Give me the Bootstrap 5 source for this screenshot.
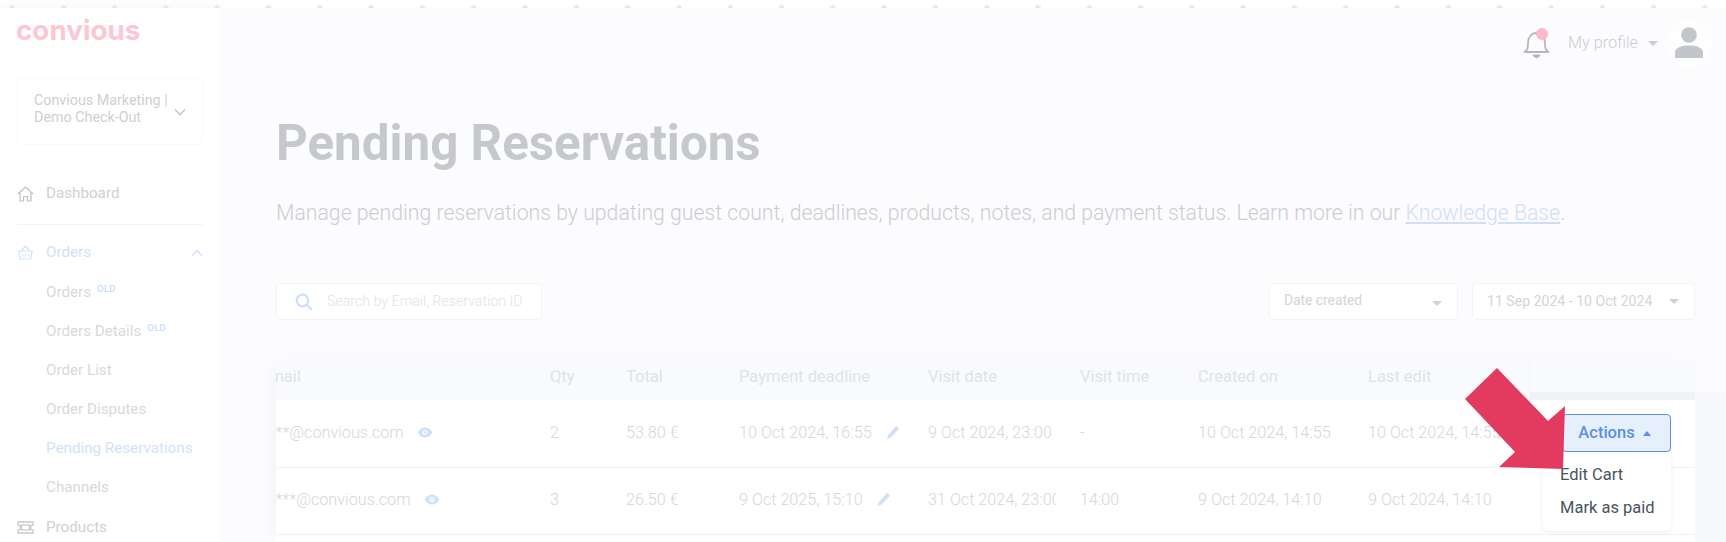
<!DOCTYPE html>
<html lang="en"><head><meta charset="utf-8"><title>Pending Reservations</title>
<link href="https://cdn.jsdelivr.net/npm/bootstrap@5.3.0/dist/css/bootstrap.min.css" rel="stylesheet">
<script src="https://cdn.jsdelivr.net/npm/bootstrap@5.3.0/dist/js/bootstrap.bundle.min.js"></script>
<style>
html,body{height:542px;overflow:hidden;background:#fff}
body{font-family:Roboto,"Liberation Sans",sans-serif;color:#d0d2d6;font-size:15px}
.strip{height:8px;background:#fff radial-gradient(circle at 12px 8px,#e4e7f3 2.6px,transparent 3px) 0 0/51.3px 8px repeat-x}
.shell{height:534px}
.side{width:220px;flex:none;background:#fff;padding:0 17px;box-shadow:0 0 18px rgba(230,233,245,.45)}
.logo{font-family:Inter,sans-serif;font-weight:700;font-size:27.8px;line-height:30px;color:#fcc7d2;margin:7px 0 0 -1px;height:32px}
.acct{height:67px;margin-top:31px;border:1px solid #f9f9fb;border-radius:5px;padding:0 16px 6px 16px;font-size:14.3px;line-height:16.5px;color:#cdd0d4}
.acct svg{flex:none;margin-top:6px}
.navi{height:39px;font-size:15.2px;color:#d0d2d6}
.navi.top{padding-left:0;gap:12px;font-weight:400;color:#cfd1d5}
.navi.sub{padding-left:29px;color:#d7d9dc}
.navi.cur{color:#d3e1fb}
.navi svg{flex:none}
.navi.last{margin-top:1px}
.divi{border-top:1px solid #f3f4f6;margin:11px 0 8px}
.old{font-size:9.5px;color:#c9dcfb;font-weight:500;position:relative;top:-3px;margin-left:6px;letter-spacing:.3px}
.mainp{flex:1;min-width:0;padding:0 31px 0 56px;background:#fcfcfe linear-gradient(#fcfcfe 384px,#f8f9fb 384px) right top/31px 100% no-repeat}
.topbar{height:70px;color:#d2d4d8;margin-right:-17px}
.topbar .prof{font-size:16.3px;font-weight:300;color:#c9ccd0;margin:0 10px 0 18px}
.caret{width:0;height:0;border-left:5px solid transparent;border-right:5px solid transparent;border-top:5px solid #c9ccd0;display:inline-block}
.avat{width:47px;height:47px;border-radius:50%;background:#fefefe;margin-left:7px}
.bellw{width:27px;height:32px}
.ttl{font-size:49.3px;font-weight:700;color:#c6c9cc;line-height:52px;margin:39px 0 0}
.sbt{font-size:21.25px;font-weight:300;color:#cbced1;line-height:26px;margin:31px 0 0;white-space:nowrap}
.sbt a{color:#cddffb}
.tools{margin-top:57px;height:37px}
.srch{width:266px;height:37px;border:1px solid #f4f4f6;border-radius:4px;background:#fff;padding-left:18px;gap:14px;font-size:14.2px;font-weight:300;color:#e1e3e6}
.sel{height:37px;border:1px solid #f4f4f6;border-radius:4px;background:#fff;padding:0 15px 0 14px;font-size:13.8px;color:#d3d5d9}
.sel .caret{border-top-color:#d0d2d6}
.s1{width:189px;margin-right:14px}.s2{width:223px}
.twrap{margin-top:38px;height:184px;overflow:hidden;position:relative;background:#fff;box-shadow:-8px 0 14px -8px rgba(225,228,238,.55)}
.tbl{table-layout:fixed;width:1435px;margin-left:-16px;border-collapse:collapse}
.tbl th,.tbl td{padding:0;white-space:nowrap;overflow:hidden;vertical-align:middle;background:#fff;color:#d5d7db;font-weight:300;font-size:16.2px;border-bottom:1px solid #f1f2f4;box-shadow:none}
.tbl th{height:42px;background:#f9fafb;color:#e0e3e8;font-weight:400;font-size:16.5px;border:0;padding-bottom:3px}
.tbl tr.rw1 td,.tbl tr.rw2 td{height:67px}
.tbl th.act{background:linear-gradient(#f9fafb 34px,#f1f2f5 34px);border-left:1px solid #f5f6f8}
.tbl td.act{overflow:visible;position:relative}
.eye{margin-left:13px;vertical-align:0}.pen{margin-left:14px;vertical-align:-2px}
.actb{position:absolute;left:33px;top:14px;width:109px;height:38px;padding:0 4px 0 0;font-size:16.5px;font-weight:500;background:#e6f0fc;border:1px solid #5b8fea;color:#5b8eea;border-radius:4px;line-height:1}
.actb:hover{background:#e6f0fc;color:#5b8eea;border-color:#5b8fea}
.caretu{width:0;height:0;border-left:4.5px solid transparent;border-right:4.5px solid transparent;border-bottom:5px solid #5b8eea;display:inline-block;margin-left:8px;vertical-align:2px}
.menuw{position:absolute;left:14px;top:52px;width:128px;height:79px;min-width:0;padding:6px 0;border:0;border-radius:0 0 5px 5px;box-shadow:0 2px 5px rgba(120,130,150,.12);z-index:5;background:#fff}
.menuw .dropdown-item{padding:0 17px;height:33px;line-height:33px;font-size:16.5px;color:#4a5360}
.arrow{position:absolute;left:0;top:0;width:1726px;height:542px;pointer-events:none;z-index:9}
.clipv{width:128px}
</style></head>
<body>
<div class="strip"></div>
<div class="d-flex shell">
<aside class="side">
  <div class="logo">convious</div>
  <div class="acct d-flex align-items-center justify-content-between">
    <span>Convious Marketing |<br>Demo Check-Out</span>
    <svg width="12" height="8" viewBox="0 0 12 8"><path d="M1 1.5l5 5 5-5" fill="none" stroke="#c6c9cd" stroke-width="1.6"/></svg>
  </div>
  <div class="navi top d-flex align-items-center" style="margin-top:29px">
    <svg width="17" height="16" viewBox="0 0 17 16" fill="none" stroke="#bfc2c7" stroke-width="1.2" stroke-linejoin="round"><path d="M.8 8L8.5 1l7.700 7M3 6.400V15h3.600v-4.500h3.800V15H14V6.400"/></svg>
    <span>Dashboard</span>
  </div>
  <div class="divi"></div>
  <div class="navi top cur d-flex align-items-center" style="margin-bottom:1px">
    <svg width="17" height="15" viewBox="0 0 17 15" fill="none" stroke="#d3e1fb" stroke-width="1.2" stroke-linejoin="round"><path d="M.6 6h15.800M2 6l1 8h11l1-8M4 6l4.500-5L13 6M5.500 9v2.500M8.500 9v2.500M11.500 9v2.500"/></svg>
    <span>Orders</span>
    <svg class="ms-auto" width="12" height="8" viewBox="0 0 12 8"><path d="M1 6.500l5-5 5 5" fill="none" stroke="#d3e1fb" stroke-width="1.500"/></svg>
  </div>
  <div class="navi sub d-flex align-items-center"><span>Orders</span><span class="old">OLD</span></div>
  <div class="navi sub d-flex align-items-center"><span>Orders Details</span><span class="old">OLD</span></div>
  <div class="navi sub d-flex align-items-center"><span>Order List</span></div>
  <div class="navi sub d-flex align-items-center"><span>Order Disputes</span></div>
  <div class="navi sub cur d-flex align-items-center"><span>Pending Reservations</span></div>
  <div class="navi sub d-flex align-items-center"><span>Channels</span></div>
  <div class="navi top last d-flex align-items-center">
    <svg width="17" height="13" viewBox="0 0 17 13" fill="none" stroke="#c6c9cd" stroke-width="1.300"><path d="M1 1h15v3a2.500 2.500 0 000 5v3H1V9a2.500 2.500 0 000-5z"/><rect x="4.500" y="4" width="8" height="5"/></svg>
    <span>Products</span>
  </div>
</aside>
<main class="mainp">
  <div class="topbar d-flex align-items-center justify-content-end">
    <span class="bellw position-relative">
      <svg width="27" height="32" viewBox="0 0 27 32" fill="none" stroke="#b4b7bb" stroke-width="1.800" stroke-linejoin="round"><path d="M1.500 25c3-2 3.500-4 3.500-9 0-6 3.500-10 8.500-10S22 10 22 16c0 5 .5 7 3.500 9z"/><path d="M10.500 28.500h6l-3 2z" fill="#b4b7bb"/><path d="M13.500 6V4.500"/></svg>
      <span class="position-absolute rounded-circle" style="width:12px;height:12px;background:#fbb9c7;left:13px;top:1px"></span>
    </span>
    <span class="prof">My profile</span><span class="caret"></span>
    <span class="avat d-flex align-items-center justify-content-center">
      <svg width="28" height="32" viewBox="0 0 28 32" fill="#c2c5c9"><circle cx="14" cy="8" r="7.800"/><path d="M0 31v-5c0-5 5-7.500 14-7.500S28 21 28 26v5z"/></svg>
    </span>
  </div>
  <h1 class="ttl">Pending Reservations</h1>
  <p class="sbt">Manage pending reservations by updating guest count, deadlines, products, notes, and payment status. Learn more in our <a href="#">Knowledge Base</a>.</p>
  <div class="tools d-flex justify-content-between">
    <div class="srch d-flex align-items-center">
      <svg width="18" height="18" viewBox="0 0 18 18" fill="none" stroke="#d0e0fb" stroke-width="2.200"><circle cx="7.500" cy="7.500" r="5.800"/><path d="M11.500 11.500l5.500 5.500"/></svg>
      <span>Search by Email, Reservation ID</span>
    </div>
    <div class="d-flex">
      <div class="sel s1 d-flex align-items-center justify-content-between"><span style="margin-top:-3px">Date created</span><span class="caret" style="margin-top:3px"></span></div>
      <div class="sel s2 d-flex align-items-center justify-content-between"><span style="font-size:14.1px">11 Sep 2024 - 10 Oct 2024</span><span class="caret"></span></div>
    </div>
  </div>
  <div class="twrap">
    <table class="tbl">
      <colgroup><col style="width:290px"><col style="width:76px"><col style="width:113px"><col style="width:189px"><col style="width:152px"><col style="width:118px"><col style="width:170px"><col style="width:161px"><col style="width:166px"></colgroup>
      <thead><tr><th>Email</th><th>Qty</th><th>Total</th><th>Payment deadline</th><th>Visit date</th><th>Visit time</th><th>Created on</th><th>Last edit</th><th class="act"></th></tr></thead>
      <tbody>
      <tr class="rw1"><td>a***@convious.com<svg class="eye" width="16" height="11" viewBox="0 0 15 11"><path d="M7.500.5C4 .5 1.500 3 .3 5.500 1.500 8 4 10.500 7.500 10.500S13.500 8 14.700 5.500C13.500 3 11 .5 7.500.5z" fill="#d0e0fb"/><circle cx="7.500" cy="5.500" r="2.500" fill="#fff"/><circle cx="7.500" cy="5.500" r="1.300" fill="#d0e0fb"/></svg></td><td>2</td><td>53.80 €</td><td>10 Oct 2024, 16:55<svg class="pen" width="14" height="15" viewBox="0 0 13 14"><path d="M9.500.8l2.700 2.700L4 12 .8 13l1-3.500z" fill="#d0e0fb"/></svg></td><td>9 Oct 2024, 23:00</td><td>-</td><td>10 Oct 2024, 14:55</td><td>10 Oct 2024, 14:55</td>
        <td class="act"><button class="btn actb" type="button">Actions<span class="caretu"></span></button>
          <ul class="dropdown-menu show menuw"><li><a class="dropdown-item" href="#">Edit Cart</a></li><li><a class="dropdown-item" href="#">Mark as paid</a></li></ul></td></tr>
      <tr class="rw2"><td>a****@convious.com<svg class="eye" width="16" height="11" viewBox="0 0 15 11"><path d="M7.500.5C4 .5 1.500 3 .3 5.500 1.500 8 4 10.500 7.500 10.500S13.500 8 14.700 5.500C13.500 3 11 .5 7.500.5z" fill="#d0e0fb"/><circle cx="7.500" cy="5.500" r="2.500" fill="#fff"/><circle cx="7.500" cy="5.500" r="1.300" fill="#d0e0fb"/></svg></td><td>3</td><td>26.50 €</td><td>9 Oct 2025, 15:10<svg class="pen" width="14" height="15" viewBox="0 0 13 14"><path d="M9.500.8l2.700 2.700L4 12 .8 13l1-3.500z" fill="#d0e0fb"/></svg></td><td><span class="d-block overflow-hidden clipv">31 Oct 2024, 23:00</span></td><td>14:00</td><td>9 Oct 2024, 14:10</td><td>9 Oct 2024, 14:10</td><td class="act"></td></tr>
      </tbody>
    </table>
  </div>
</main>
</div>
<svg class="arrow" viewBox="0 0 1726 542"><polygon fill="#e23b5f" points="1497,368 1548,421 1565,406 1563,469 1499,467 1515,452 1465,399"/></svg>
</body></html>
